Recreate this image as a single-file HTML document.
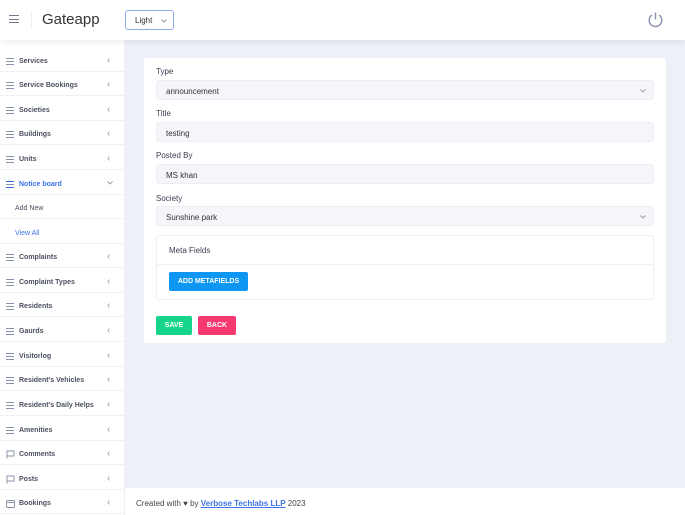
<!DOCTYPE html>
<html><head><style>
*{box-sizing:border-box;margin:0;padding:0}
body{width:685px;height:515px;overflow:hidden;background:#eef0f8;font-family:"Liberation Sans",sans-serif;color:#3a3f51;position:relative}
.hdr{position:absolute;left:0;top:0;width:685px;height:40px;background:#fff;box-shadow:0 2px 6px rgba(0,0,0,.08);z-index:2}
.side{position:absolute;left:0;top:40px;width:124px;height:475px;background:#fff}
.it{position:absolute;left:0;width:124px;height:24px;border-bottom:1px solid #f0f1f5;font-size:7px;font-weight:bold;color:#4a5060}
.it span{position:absolute;left:19px;top:10px;white-space:nowrap}
.it i{position:absolute;left:6px;top:10px;width:8px;height:7px;border-top:1px solid #8890a8;border-bottom:1px solid #8890a8}
.it i:after{content:"";position:absolute;left:0;top:2px;width:8px;height:1px;background:#8890a8}
.it b{position:absolute;left:107px;top:7px;font-weight:normal;color:#999;font-size:10px}
.it svg{position:absolute;left:6px;top:9px}
.card{position:absolute;left:144px;top:58px;width:522px;height:285px;background:#fff;border-radius:3px}
.lb{position:absolute;left:12px;font-size:8px;color:#3a3f51}
.in{position:absolute;left:12px;width:498px;height:20px;background:#f5f6fa;border:1px solid #eceef4;border-radius:3px;font-size:8px;padding:6px 9px;color:#333}
.btn{position:absolute;height:19px;color:#fff;font-size:7px;font-weight:bold;text-align:center;line-height:19px;border-radius:2px}
.foot{position:absolute;left:125px;top:488px;width:560px;height:27px;background:#fff;font-size:8px;padding:11px 11px;color:#444}
</style></head><body>
<div class="hdr">
 <div style="position:absolute;left:9px;top:15px;width:10px;height:8px;border-top:1px solid #778;border-bottom:1px solid #778"><div style="position:absolute;top:3px;width:10px;height:1px;background:#778"></div></div>
 <div style="position:absolute;left:31px;top:12px;width:1px;height:16px;background:#eee"></div>
 <div style="position:absolute;left:42px;top:11px;font-size:15px;color:#333">Gateapp</div>
 <div style="position:absolute;left:125px;top:10px;width:49px;height:20px;border:1px solid #8fa8e8;border-radius:3px;font-size:8px;padding:5px 9px;color:#333;white-space:nowrap">Light<svg style="position:absolute;left:35px;top:8px" width="6" height="4" viewBox="0 0 6 4"><path d="M0.5 0.5 L3 3 L5.5 0.5" fill="none" stroke="#888" stroke-width="0.9"/></svg></div>
 <svg style="position:absolute;left:647px;top:11px" width="17" height="17" viewBox="0 0 17 17"><path d="M5 4 A6.3 6.3 0 1 0 12 4" fill="none" stroke="#8a93b0" stroke-width="1.4"/><line x1="8.5" y1="1.5" x2="8.5" y2="8.5" stroke="#8a93b0" stroke-width="1.4"/></svg>
</div>
<div class="side">
<div class="it" style="top:8px"><i></i><span>Services</span><b>‹</b></div>
<div class="it" style="top:32px"><i></i><span>Service Bookings</span><b>‹</b></div>
<div class="it" style="top:57px"><i></i><span>Societies</span><b>‹</b></div>
<div class="it" style="top:81px"><i></i><span>Buildings</span><b>‹</b></div>
<div class="it" style="top:106px"><i></i><span>Units</span><b>‹</b></div>
<div class="it" style="top:131px;color:#3b73e8"><i style="border-color:#3b73e8"></i><span>Notice board</span><b style="top:8px"><svg style="left:0;top:2px" width="6" height="4" viewBox="0 0 6 4"><path d="M0.5 0.5 L3 3 L5.5 0.5" fill="none" stroke="#999" stroke-width="0.9"/></svg></b></div>
<div class="it" style="top:155px;font-weight:normal"><span style="left:15px">Add New</span></div>
<div class="it" style="top:180px;color:#3b73e8;font-weight:normal"><span style="left:15px">View All</span></div>
<div class="it" style="top:204px"><i></i><span>Complaints</span><b>‹</b></div>
<div class="it" style="top:229px"><i></i><span>Complaint Types</span><b>‹</b></div>
<div class="it" style="top:253px"><i></i><span>Residents</span><b>‹</b></div>
<div class="it" style="top:278px"><i></i><span>Gaurds</span><b>‹</b></div>
<div class="it" style="top:303px"><i></i><span>Visitorlog</span><b>‹</b></div>
<div class="it" style="top:327px"><i></i><span>Resident's Vehicles</span><b>‹</b></div>
<div class="it" style="top:352px"><i></i><span>Resident's Daily Helps</span><b>‹</b></div>
<div class="it" style="top:377px"><i></i><span>Amenities</span><b>‹</b></div>
<div class="it" style="top:401px"><svg width="9" height="9" viewBox="0 0 9 9"><path d="M1 8.5 V1 H8 V6 H1" fill="none" stroke="#8890a8" stroke-width="0.9"/></svg><span>Comments</span><b>‹</b></div>
<div class="it" style="top:426px"><svg width="9" height="9" viewBox="0 0 9 9"><path d="M1 8.5 V1 H8 V6 H1" fill="none" stroke="#8890a8" stroke-width="0.9"/></svg><span>Posts</span><b>‹</b></div>
<div class="it" style="top:450px"><svg width="9" height="9" viewBox="0 0 9 9"><rect x="0.5" y="1.5" width="8" height="7" rx="1" fill="none" stroke="#8890a8" stroke-width="0.9"/><line x1="0.5" y1="3.5" x2="8.5" y2="3.5" stroke="#8890a8" stroke-width="0.9"/></svg><span>Bookings</span><b>‹</b></div>
</div>
<div class="card">
 <div class="lb" style="top:9px">Type</div>
 <div class="in" style="top:22px">announcement<svg style="position:absolute;right:7px;top:8px" width="6" height="4" viewBox="0 0 6 4"><path d="M0.5 0.5 L3 3 L5.5 0.5" fill="none" stroke="#999" stroke-width="0.9"/></svg></div>
 <div class="lb" style="top:51px">Title</div>
 <div class="in" style="top:64px">testing</div>
 <div class="lb" style="top:93px">Posted By</div>
 <div class="in" style="top:106px">MS khan</div>
 <div class="lb" style="top:136px">Society</div>
 <div class="in" style="top:148px">Sunshine park<svg style="position:absolute;right:7px;top:8px" width="6" height="4" viewBox="0 0 6 4"><path d="M0.5 0.5 L3 3 L5.5 0.5" fill="none" stroke="#999" stroke-width="0.9"/></svg></div>
 <div style="position:absolute;left:12px;top:177px;width:498px;height:65px;border:1px solid #eceef4;border-radius:3px">
  <div style="position:absolute;left:12px;top:10px;font-size:8px">Meta Fields</div>
  <div style="position:absolute;left:0;top:28px;width:100%;height:1px;background:#f0f1f5"></div>
  <div class="btn" style="left:12px;top:36px;width:79px;background:#0d96f2">ADD METAFIELDS</div>
 </div>
 <div class="btn" style="left:12px;top:258px;width:36px;background:#17d48b">SAVE</div>
 <div class="btn" style="left:54px;top:258px;width:38px;background:#f5386f">BACK</div>
</div>
<div class="foot">Created with ♥ by <a style="color:#3b73e8;font-weight:bold;text-decoration:underline">Verbose Techlabs LLP</a> 2023</div>
</body></html>
